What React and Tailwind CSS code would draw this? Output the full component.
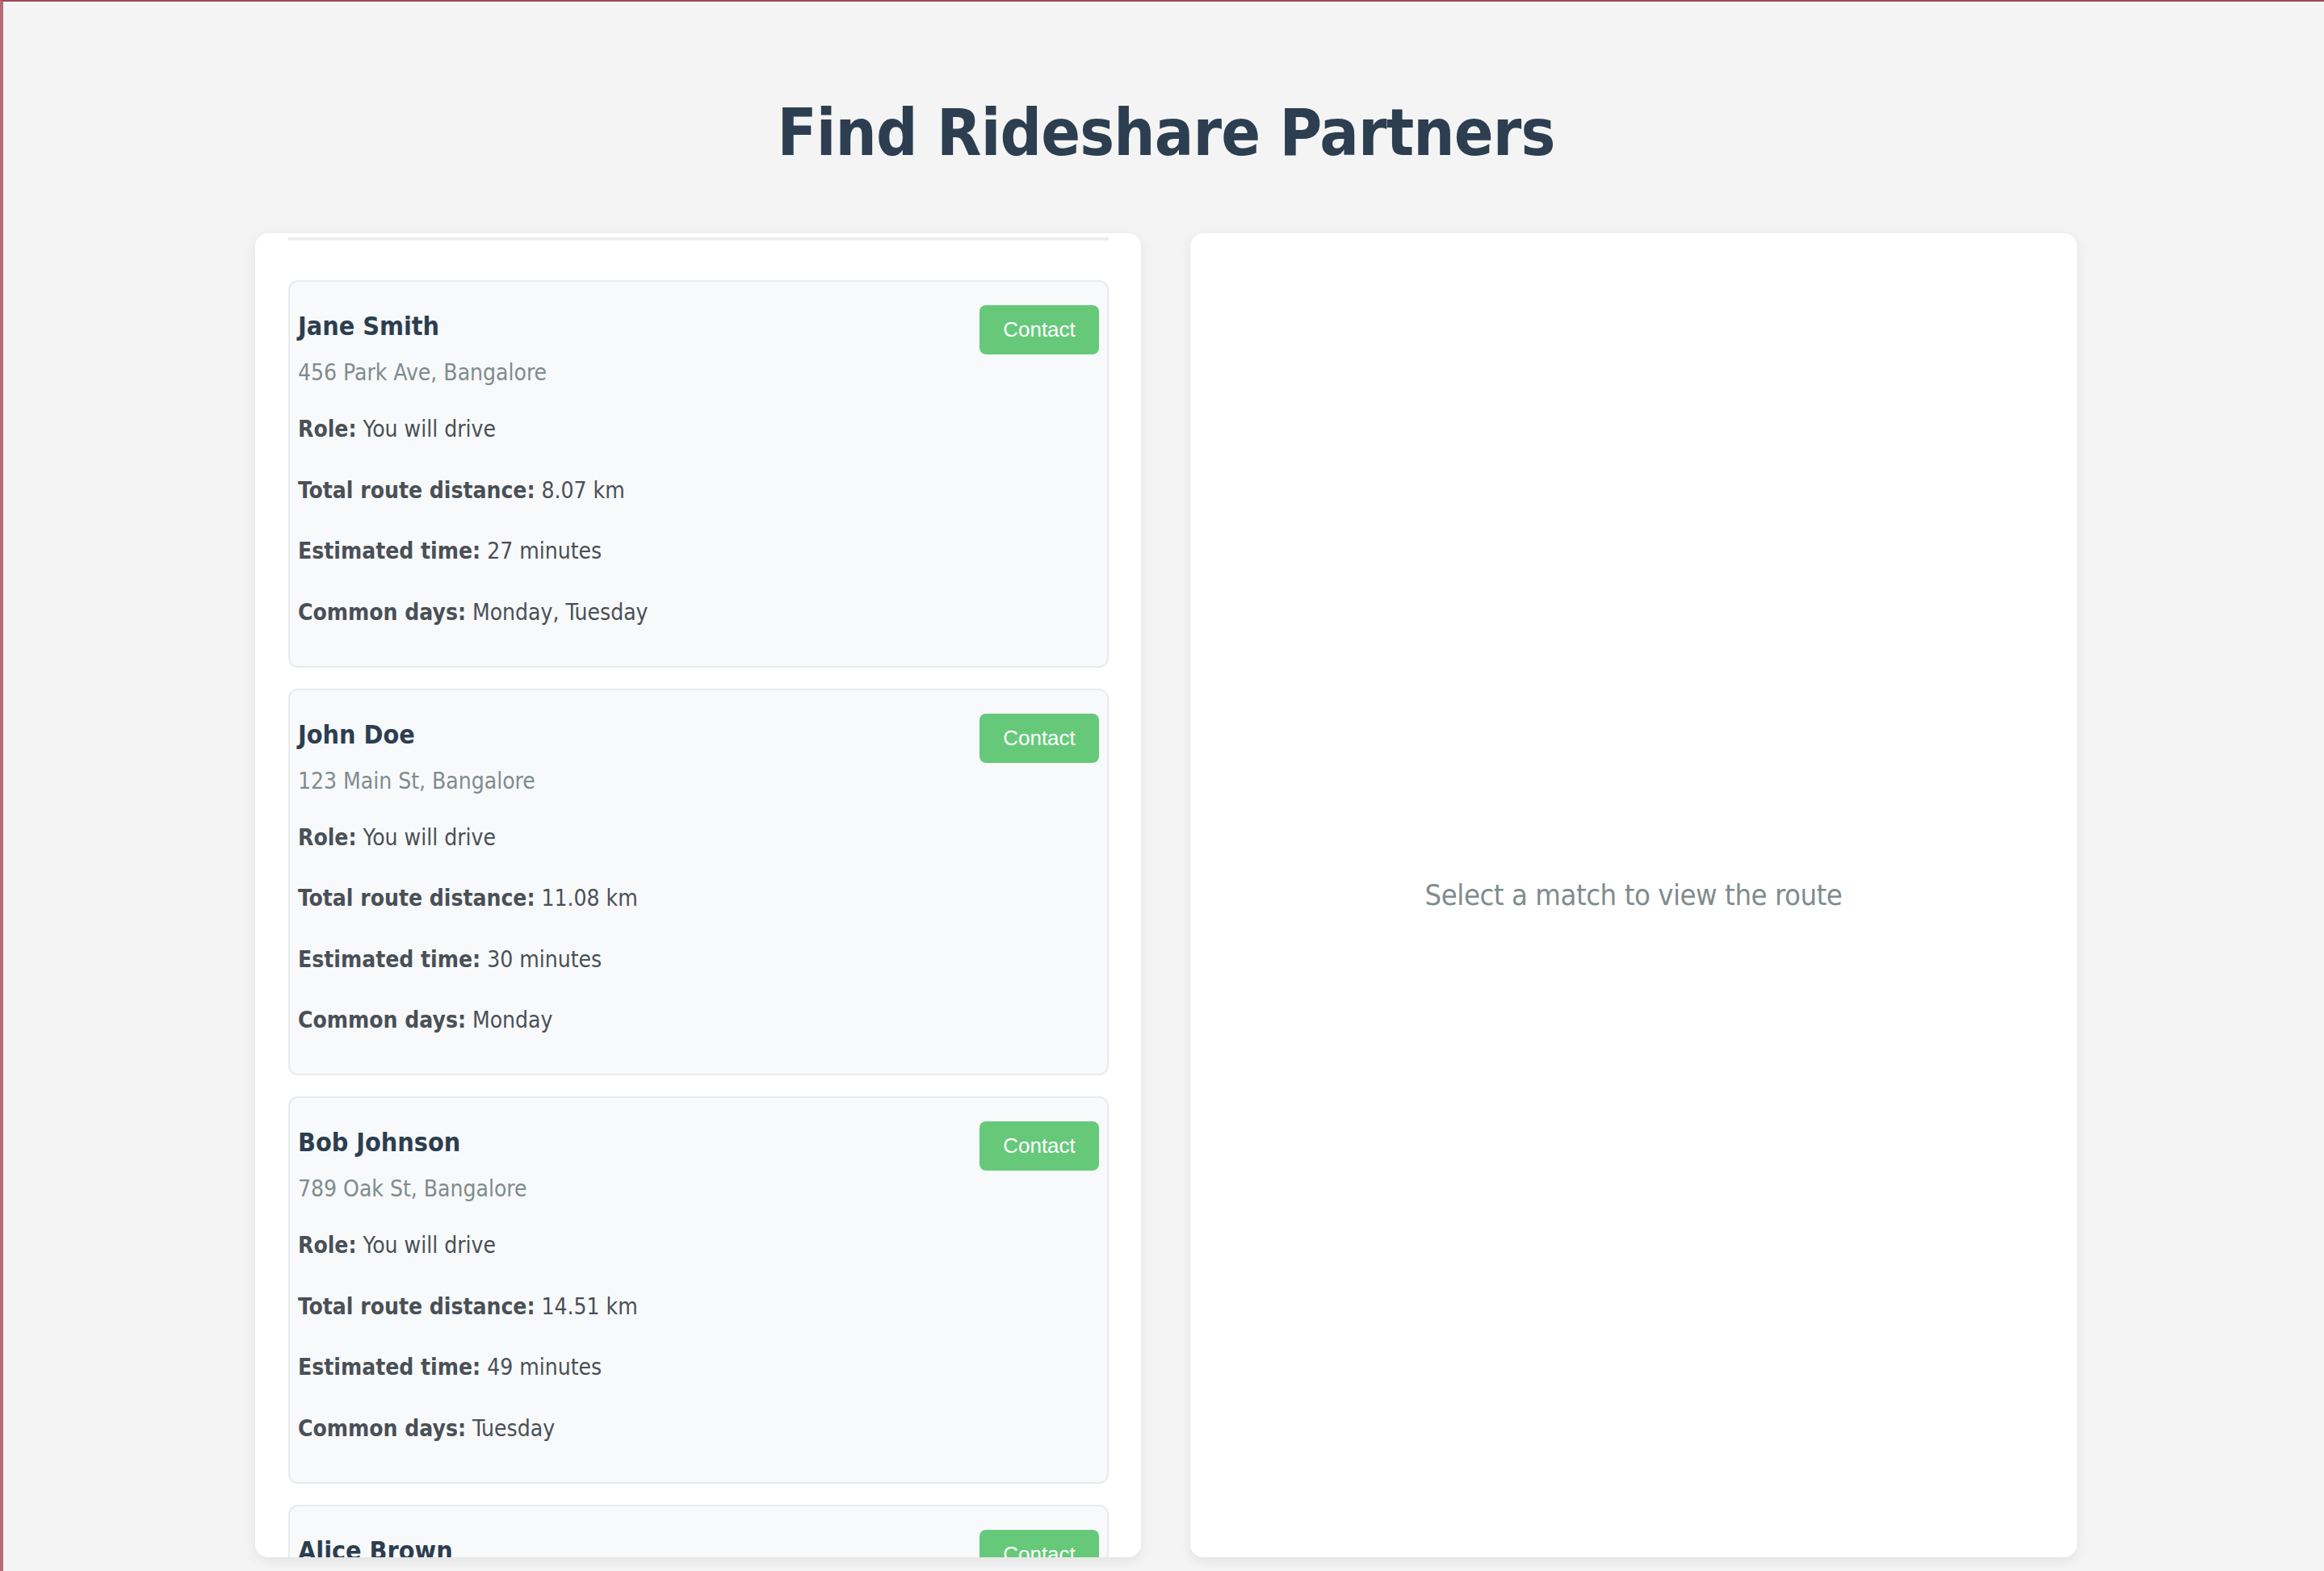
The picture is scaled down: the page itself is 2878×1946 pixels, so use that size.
import React from "react";

const matches = [
  { name: "Jane Smith", address: "456 Park Ave, Bangalore", role: "You will drive", distance: "8.07 km", time: "27 minutes", days: "Monday, Tuesday" },
  { name: "John Doe", address: "123 Main St, Bangalore", role: "You will drive", distance: "11.08 km", time: "30 minutes", days: "Monday" },
  { name: "Bob Johnson", address: "789 Oak St, Bangalore", role: "You will drive", distance: "14.51 km", time: "49 minutes", days: "Tuesday" },
  { name: "Alice Brown", address: "321 Elm St, Bangalore", role: "You will drive", distance: "16.20 km", time: "52 minutes", days: "Wednesday" },
];

function Row({ label, value, first }) {
  return (
    <p className={`${first ? "mt-[34px]" : "mt-[39.5px]"} text-[28px] leading-[36px] text-[#495057]`}>
      <span className="font-bold">{label}</span> {value}
    </p>
  );
}

function MatchCard({ m }) {
  return (
    <div className="mb-[26px] rounded-[12px] border-2 border-[#e8ebee] bg-[#f8f9fa] pl-[10px] pr-[10px] pt-[29px] pb-[48px]">
      <div className="flex items-start justify-between">
        <div className="mt-[6px] text-[32px] leading-[40px] font-bold text-[#2c3e50]">{m.name}</div>
        <button className="h-[61px] w-[148px] rounded-[8px] bg-[#66c97a] font-['Liberation_Sans',Arial,sans-serif] text-[26px] text-white">
          Contact
        </button>
      </div>
      <div className="mt-[5px] text-[28px] leading-[36px] text-[#7f8c8d]">{m.address}</div>
      <Row first label="Role:" value={m.role} />
      <Row label="Total route distance:" value={m.distance} />
      <Row label="Estimated time:" value={m.time} />
      <Row label="Common days:" value={m.days} />
    </div>
  );
}

export default function App() {
  return (
    <div className="min-h-screen w-full border-t-2 border-l-4 border-t-[#9e4656] border-l-[#b46a75] bg-[#f4f4f4] font-[family-name:'DejaVu_Sans_Condensed','DejaVu_Sans',sans-serif] font-stretch-condensed">
      <h1 className="pt-[113px] pl-[6px] text-center text-[80px] leading-[100px] font-bold tracking-[-0.8px] text-[#2c3e50]">
        Find Rideshare Partners
      </h1>
      <div className="mt-[74px] flex justify-center gap-[61px] pl-[6px]">
        <div className="h-[1640px] w-[1097px] overflow-hidden rounded-[16px] bg-white pl-[41px] pr-[40px] shadow-[0_4px_16px_rgba(0,0,0,0.08)]">
          <div className="mt-[5px] mb-[49px] h-[4px] bg-[#eeeeee]" />
          {matches.map((m) => (
            <MatchCard key={m.name} m={m} />
          ))}
        </div>
        <div className="flex h-[1640px] w-[1098px] items-center justify-center rounded-[16px] bg-white shadow-[0_4px_16px_rgba(0,0,0,0.08)]">
          <p className="text-[36px] leading-[44px] tracking-[-0.4px] text-[#7f8c8d]">Select a match to view the route</p>
        </div>
      </div>
    </div>
  );
}
